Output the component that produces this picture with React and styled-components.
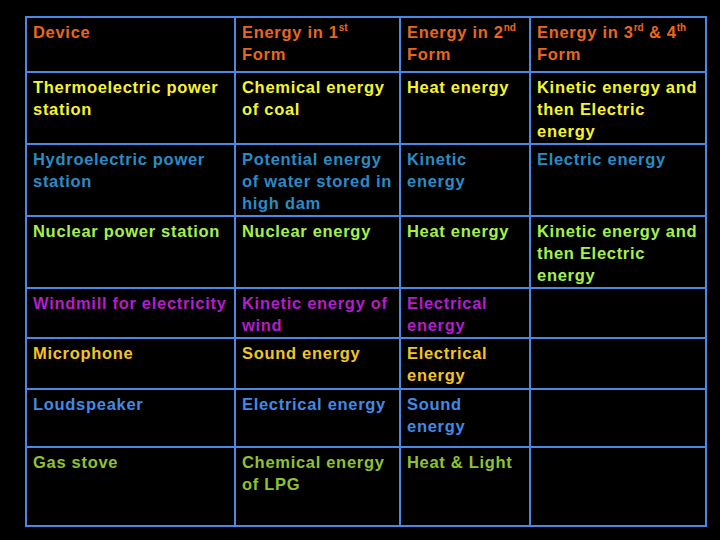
import React from 'react';
import styled, { createGlobalStyle } from 'styled-components';

const GlobalStyle = createGlobalStyle`
  html, body {
    margin: 0;
    padding: 0;
    background: #000;
  }
`;

const Page = styled.div`
  width: 720px;
  height: 540px;
  box-sizing: border-box;
  padding: 16px 0 0 25px;
  background: #000;
  font-family: "Liberation Sans", Arial, sans-serif;
`;

const Table = styled.table`
  border-collapse: collapse;
  table-layout: fixed;
  width: 682px;
`;

const Row = styled.tr`
  height: ${(p) => p.$h}px;
  color: ${(p) => p.$color};
`;

const Cell = styled.td`
  border: 2px solid #4a88e6;
  vertical-align: top;
  padding: 2.5px ${(p) => p.$pr}px 0 6px;
  font-size: 16.5px;
  font-weight: 700;
  line-height: 22px;
  letter-spacing: 0.7px;
  overflow: hidden;
`;

const Sup = styled.sup`
  font-size: 10px;
  letter-spacing: 0;
  line-height: 0;
  vertical-align: 7px;
`;

const rows = [
  {
    h: 55,
    color: '#e8671e',
    cells: [
      'Device',
      <>Energy in 1<Sup>st</Sup> Form</>,
      <>Energy in 2<Sup>nd</Sup> Form</>,
      <>Energy in 3<Sup>rd</Sup> &amp; 4<Sup>th</Sup> Form</>,
    ],
  },
  {
    h: 72,
    color: '#f5f52a',
    cells: ['Thermoelectric power station', 'Chemical energy of coal', 'Heat energy', 'Kinetic energy and then Electric energy'],
  },
  {
    h: 72,
    color: '#2a8cc6',
    cells: ['Hydroelectric power station', 'Potential energy of water stored in high dam', 'Kinetic energy', 'Electric energy'],
  },
  {
    h: 72,
    color: '#a6f04a',
    cells: ['Nuclear power station', 'Nuclear energy', 'Heat energy', 'Kinetic energy and then Electric energy'],
  },
  {
    h: 50,
    color: '#b21ecb',
    cells: ['Windmill for electricity', 'Kinetic energy of wind', 'Electrical energy', ''],
  },
  {
    h: 51,
    color: '#f2c424',
    cells: ['Microphone', 'Sound energy', 'Electrical energy', ''],
  },
  {
    h: 58,
    color: '#4389e6',
    cells: ['Loudspeaker', 'Electrical energy', 'Sound energy', ''],
  },
  {
    h: 79,
    color: '#8fc230',
    cells: ['Gas stove', 'Chemical energy of LPG', 'Heat & Light', ''],
  },
];

const widths = [209, 165, 130, 176];
const padRight = [4, 3, 10, 4];

export default function App() {
  return (
    <Page>
      <GlobalStyle />
      <Table>
        <colgroup>
          {widths.map((w, i) => (
            <col key={i} style={{ width: w }} />
          ))}
        </colgroup>
        <tbody>
          {rows.map((r, i) => (
            <Row key={i} $h={r.h} $color={r.color}>
              {r.cells.map((c, j) => (
                <Cell key={j} $pr={padRight[j]}>{c}</Cell>
              ))}
            </Row>
          ))}
        </tbody>
      </Table>
    </Page>
  );
}
